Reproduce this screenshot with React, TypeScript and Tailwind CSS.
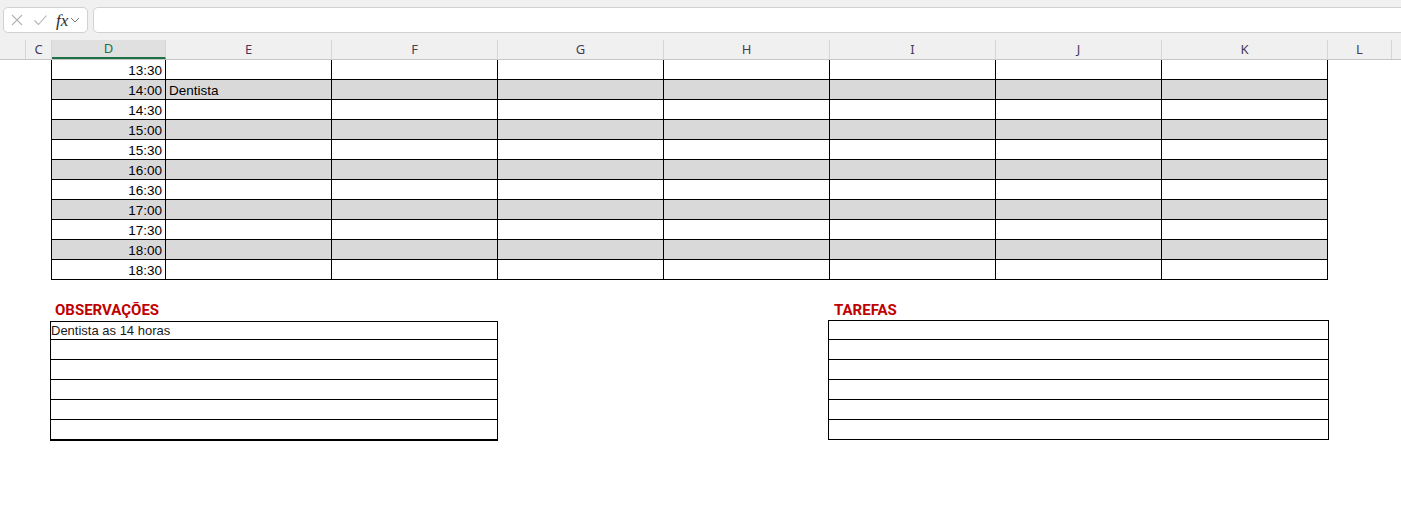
import React from 'react';

const cellFont = { fontFamily: '"Liberation Sans", Arial, sans-serif' };

const times = ['13:30', '14:00', '14:30', '15:00', '15:30', '16:00', '16:30', '17:00', '17:30', '18:00', '18:30'];
const cols = ['E', 'F', 'G', 'H', 'I', 'J', 'K'];

const FormulaBar: React.FC = () => (
  <div className="h-[40px] bg-[#f0f0f0] flex items-start pt-[7px] pl-[3px] gap-[5px] overflow-hidden">
    <div className="w-[85px] h-[26px] shrink-0 bg-white border border-[#d1d1d1] rounded-[5px] flex items-center pl-[6px]">
      {/* cancelar */}
      <svg width="14" height="14" viewBox="0 0 14 14" className="mr-[9px]">
        <path d="M2 2 L12 12 M12 2 L2 12" stroke="#b3b3b3" strokeWidth="1.1" fill="none" />
      </svg>
      {/* confirmar */}
      <svg width="15" height="14" viewBox="0 0 15 14" className="mr-[8px]">
        <path d="M1.5 7.5 L5.5 11.5 L13.5 2.5" stroke="#b3b3b3" strokeWidth="1.1" fill="none" />
      </svg>
      <span className="text-[17px] italic text-[#2b2b2b] leading-none mr-[2px]" style={{ fontFamily: '"Liberation Serif", "DejaVu Serif", serif' }}>
        fx
      </span>
      <svg width="10" height="8" viewBox="0 0 10 8">
        <path d="M1 2 L5 6 L9 2" stroke="#7a7a7a" strokeWidth="1" fill="none" />
      </svg>
    </div>
    <div className="w-[1340px] h-[26px] shrink-0 bg-white border border-[#d1d1d1] rounded-[5px]" />
  </div>
);

const HeaderCell: React.FC<{ label: string; w: string; selected?: boolean }> = ({ label, w, selected }) => (
  <div
    className={`${w} shrink-0 h-full flex items-center justify-center border-r border-[#d6d6d6] text-[13px] ${
      selected ? 'bg-[#e0e0e0] text-[#1e7145] border-b-2 border-b-[#1e7145]' : 'text-[#4a3a5a]'
    }`}
  >
    {label}
  </div>
);

const ColumnHeaders: React.FC = () => (
  <div className="h-[20px] bg-[#f0f0f0] border-b border-[#c6c6c6] flex" style={{ fontFamily: '"Noto Sans", "Open Sans", sans-serif' }}>
    <div className="w-[26px] shrink-0 border-r border-[#d6d6d6]" />
    <HeaderCell label="C" w="w-[26px]" />
    <HeaderCell label="D" w="w-[114px]" selected />
    {cols.map((c) => (
      <HeaderCell key={c} label={c} w="w-[166px]" />
    ))}
    <HeaderCell label="L" w="w-[64px]" />
    <div className="flex-1" />
  </div>
);

const Schedule: React.FC = () => (
  <div className="ml-[51px] w-[1277px] border-l border-black" style={cellFont}>
    {times.map((t, i) => (
      <div key={t} className={`flex h-[20px] border-b border-black ${i % 2 === 1 ? 'bg-[#d9d9d9]' : 'bg-white'}`}>
        <div className="w-[114px] shrink-0 border-r border-black text-right pr-[3px] pt-[1px] text-[13.5px] leading-[19px] text-black">{t}</div>
        {cols.map((c) => (
          <div key={c} className="w-[166px] shrink-0 border-r border-black pl-[3px] pt-[1px] text-[13.5px] leading-[19px] text-black">
            {c === 'E' && t === '14:00' ? 'Dentista' : ''}
          </div>
        ))}
      </div>
    ))}
  </div>
);

const headingFont = { fontFamily: 'Roboto, "Liberation Sans", sans-serif' };

const Observacoes: React.FC = () => (
  <div className="ml-[50px] w-[448px]">
    <div className="h-[41px] flex items-end pl-[5px] pb-[1px]">
      <span className="text-[15px] font-bold leading-[20px] text-[#c00000]" style={headingFont}>OBSERVAÇÕES</span>
    </div>
    <div className="border-t border-x border-black" style={cellFont}>
      <div className="h-[18px] border-b border-black text-[13px] leading-[17px] text-[#1a1a1a]">Dentista as 14 horas</div>
      {[0, 1, 2, 3].map((k) => (
        <div key={k} className="h-[20px] border-b border-black" />
      ))}
      <div className="h-[21px] border-b-2 border-black" />
    </div>
  </div>
);

const Tarefas: React.FC = () => (
  <div className="ml-[330px] w-[501px]">
    <div className="h-[40px] flex items-end pl-[6px]">
      <span className="text-[15px] font-bold leading-[20px] text-[#c00000]" style={headingFont}>TAREFAS</span>
    </div>
    <div className="border-t border-x border-black">
      <div className="h-[19px] border-b border-black" />
      {[0, 1, 2, 3, 4].map((k) => (
        <div key={k} className="h-[20px] border-b border-black" />
      ))}
    </div>
  </div>
);

export default function App() {
  return (
    <div className="w-[1401px] h-[506px] bg-white overflow-hidden">
      <FormulaBar />
      <ColumnHeaders />
      <Schedule />
      <div className="flex">
        <Observacoes />
        <Tarefas />
      </div>
    </div>
  );
}
